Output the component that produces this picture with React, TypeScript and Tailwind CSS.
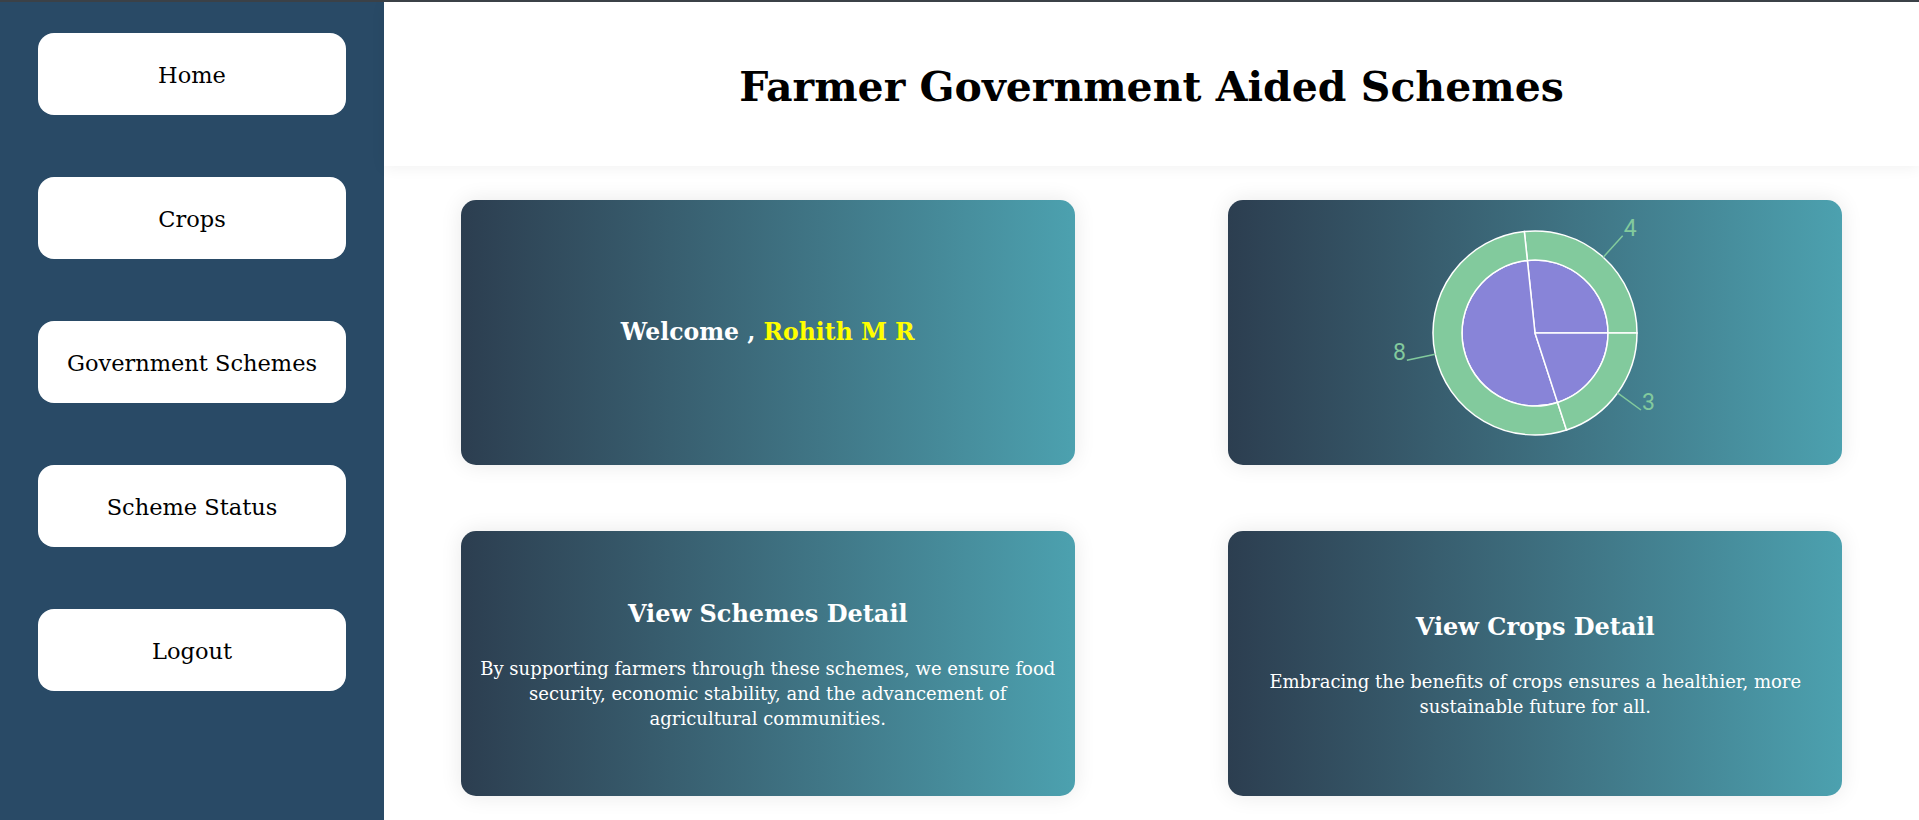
import React from "react"

const navItems = ["Home", "Crops", "Government Schemes", "Scheme Status", "Logout"]

const data = [4, 8, 3]
const CX = 307
const CY = 133
const R_IN = 73
const R_OUT = 102

function pt(r: number, deg: number) {
  const a = (deg * Math.PI) / 180
  return [CX + r * Math.cos(a), CY - r * Math.sin(a)]
}

function sector(r: number, a1: number, a2: number) {
  const [x1, y1] = pt(r, a1)
  const [x2, y2] = pt(r, a2)
  const large = a2 - a1 > 180 ? 1 : 0
  return `M${CX} ${CY} L${x1} ${y1} A${r} ${r} 0 ${large} 0 ${x2} ${y2} Z`
}

function ring(ri: number, ro: number, a1: number, a2: number) {
  const [x1, y1] = pt(ro, a1)
  const [x2, y2] = pt(ro, a2)
  const [x3, y3] = pt(ri, a2)
  const [x4, y4] = pt(ri, a1)
  const large = a2 - a1 > 180 ? 1 : 0
  return `M${x1} ${y1} A${ro} ${ro} 0 ${large} 0 ${x2} ${y2} L${x3} ${y3} A${ri} ${ri} 0 ${large} 1 ${x4} ${y4} Z`
}

function PieChart() {
  const total = data.reduce((s, v) => s + v, 0)
  let start = 0
  const slices = data.map((v) => {
    const a1 = start
    const a2 = start + (v / total) * 360
    start = a2
    return { v, a1, a2, mid: (a1 + a2) / 2 }
  })

  return (
    <svg viewBox="0 0 614 265" className="w-full h-full">
      {slices.map((s, i) => (
        <path key={"in" + i} d={sector(R_IN, s.a1, s.a2)} fill="#8884d8" stroke="#fff" strokeWidth={1.5} />
      ))}
      {slices.map((s, i) => (
        <path key={"out" + i} d={ring(R_IN, R_OUT, s.a1, s.a2)} fill="#82ca9d" stroke="#fff" strokeWidth={1.5} />
      ))}
      {slices.map((s, i) => {
        const [x1, y1] = pt(R_OUT, s.mid)
        const [x2, y2] = pt(R_OUT + 29, s.mid)
        const right = Math.cos((s.mid * Math.PI) / 180) > 0
        return (
          <g key={"lbl" + i}>
            <path d={`M${x1} ${y1} L${x2} ${y2}`} stroke="#82ca9d" strokeWidth={1.5} fill="none" />
            <text
              x={right ? x2 + 1 : x2 - 1}
              y={y2}
              fill="#82ca9d"
              fontSize={23}
              textAnchor={right ? "start" : "end"}
              style={{ fontFamily: "Roboto, sans-serif" }}
            >
              {s.v}
            </text>
          </g>
        )
      })}
    </svg>
  )
}

function Card({ children }: { children: React.ReactNode }) {
  return (
    <div className="w-[40%] h-[265px] rounded-[15px] bg-gradient-to-r from-[#2c3e50] to-[#4ca1af] shadow-[0_0_22px_rgba(0,0,0,0.09)] flex flex-col items-center justify-center text-center text-white">
      {children}
    </div>
  )
}

export default function App() {
  return (
    <div className="h-screen flex border-t-2 border-[#3b4147] font-['DejaVu_Serif',serif] overflow-hidden">
      <aside className="w-[384px] shrink-0 bg-[#294a66] flex flex-col items-center pt-[31px] gap-[62px]">
        {navItems.map((item) => (
          <button
            key={item}
            className="w-[308px] h-[82px] pt-[3px] rounded-2xl bg-white text-black text-[22.5px]"
          >
            {item}
          </button>
        ))}
      </aside>
      <main className="flex-1 flex flex-col bg-white">
        <header className="h-[164px] bg-white shadow-[0_2px_14px_rgba(0,0,0,0.06)] flex items-center justify-center pt-2 relative z-10">
          <h1 className="text-[41px] font-bold text-black">Farmer Government Aided Schemes</h1>
        </header>
        <div className="flex flex-wrap justify-around gap-y-[66px] pt-[34px]">
          <Card>
            <h2 className="text-[23.5px] font-bold">
              Welcome , <span className="text-[#ffff00]">Rohith M R</span>
            </h2>
          </Card>
          <div className="w-[40%] h-[265px] rounded-[15px] bg-gradient-to-r from-[#2c3e50] to-[#4ca1af] shadow-[0_0_22px_rgba(0,0,0,0.09)]">
            <PieChart />
          </div>
          <Card>
            <h2 className="text-[24px] font-bold">View Schemes Detail</h2>
            <p className="mt-[24px] w-[580px] text-[18px] leading-[25px]">
              By supporting farmers through these schemes, we ensure food security, economic stability, and the advancement of agricultural communities.
            </p>
          </Card>
          <Card>
            <h2 className="text-[24px] font-bold">View Crops Detail</h2>
            <p className="mt-[24px] w-[580px] text-[18px] leading-[25px]">
              Embracing the benefits of crops ensures a healthier, more sustainable future for all.
            </p>
          </Card>
        </div>
      </main>
    </div>
  )
}
